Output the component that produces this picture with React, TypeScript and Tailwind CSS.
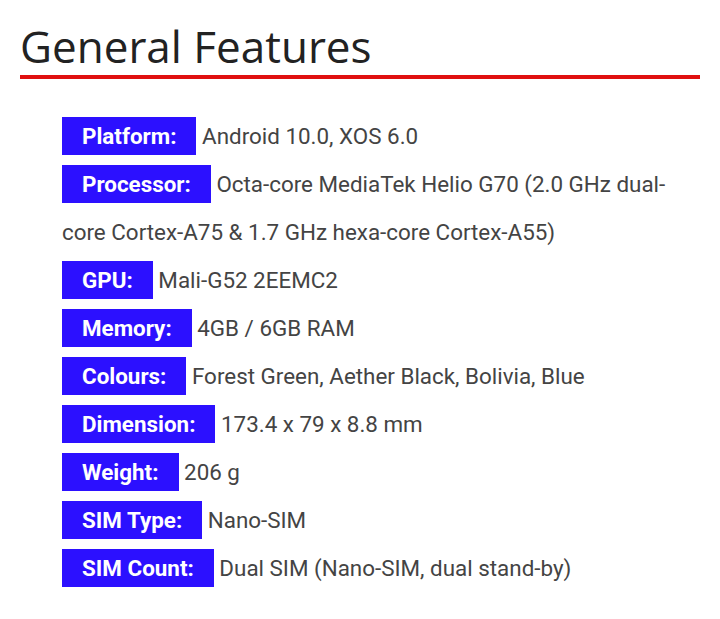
import React from "react";

const specs: { label: string; value: string }[] = [
  { label: "Platform:", value: "Android 10.0, XOS 6.0" },
  {
    label: "Processor:",
    value: "Octa-core MediaTek Helio G70 (2.0 GHz dual-core Cortex-A75 & 1.7 GHz hexa-core Cortex-A55)",
  },
  { label: "GPU:", value: "Mali-G52 2EEMC2" },
  { label: "Memory:", value: "4GB / 6GB RAM" },
  { label: "Colours:", value: "Forest Green, Aether Black, Bolivia, Blue" },
  { label: "Dimension:", value: "173.4 x 79 x 8.8 mm" },
  { label: "Weight:", value: "206 g" },
  { label: "SIM Type:", value: "Nano-SIM" },
  { label: "SIM Count:", value: "Dual SIM (Nano-SIM, dual stand-by)" },
];

const App: React.FC = () => {
  return (
    <div className="min-h-screen bg-white px-5 pt-[18px]">
      <h2 className="font-['Open_Sans',sans-serif] text-[44px] leading-[56px] font-normal text-[#222]">
        General Features
      </h2>
      <div className="mt-[1px] h-1 bg-[#e01010]" />
      <ul className="mt-[33px] pl-[42px] pr-4 font-['Roboto',sans-serif] text-[22.4px] leading-[48px] text-[#444]">
        {specs.map((s) => (
          <li key={s.label}>
            <span className="bg-[#2c10ff] px-5 py-[6px] font-bold text-white">{s.label}</span>{" "}
            {s.value}
          </li>
        ))}
      </ul>
    </div>
  );
};

export default App;
